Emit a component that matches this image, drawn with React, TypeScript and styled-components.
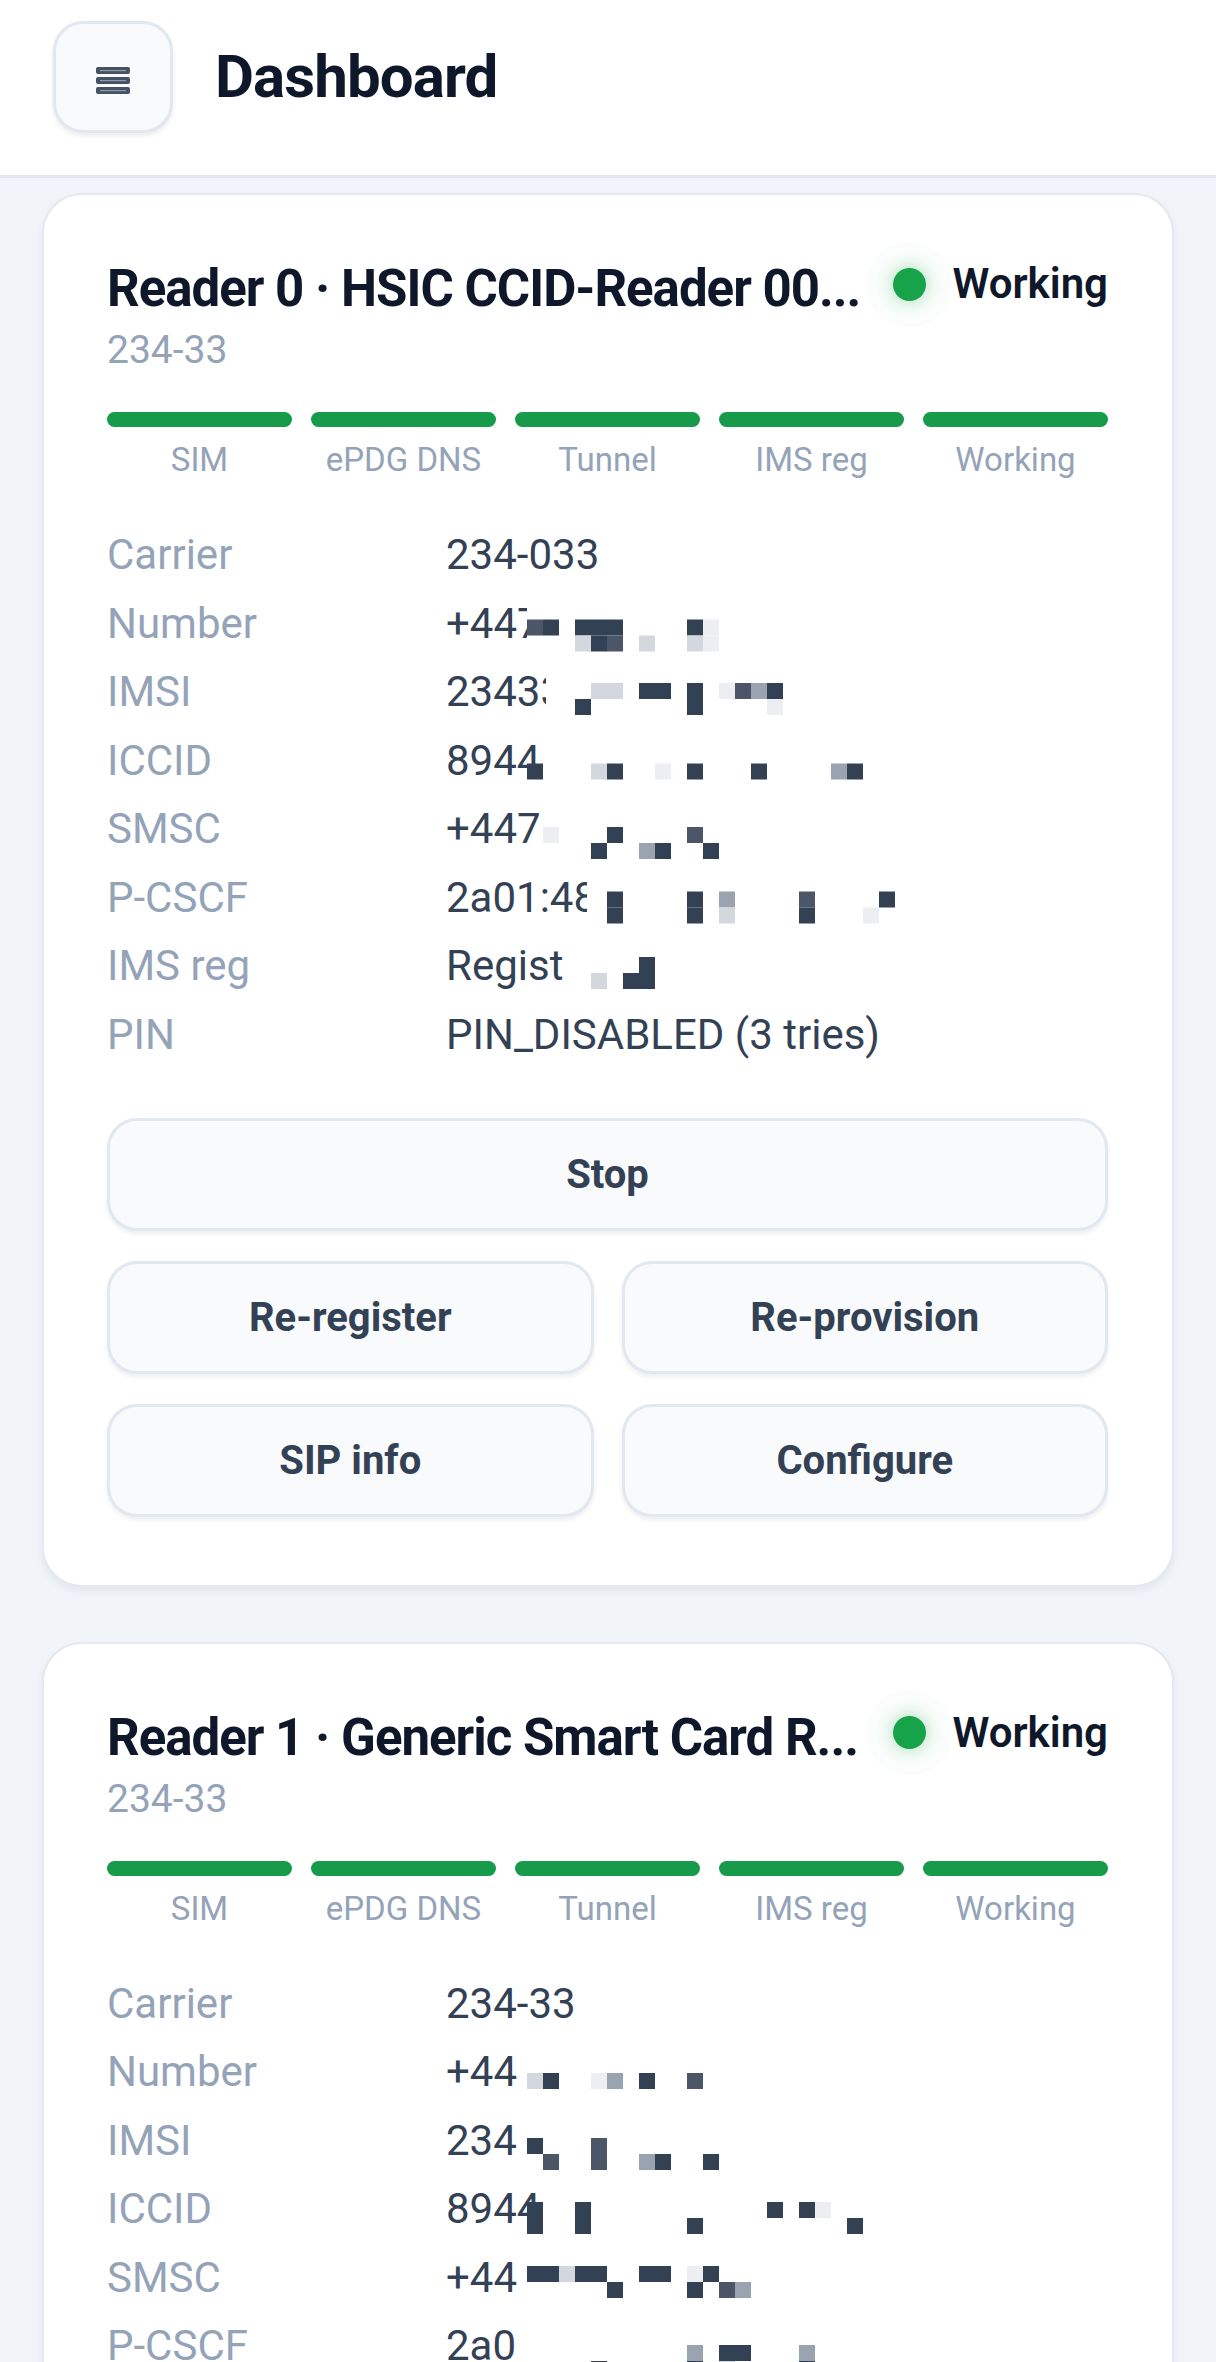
import React from "react";
import styled, { createGlobalStyle } from "styled-components";

const GlobalStyle = createGlobalStyle`
  html, body { margin: 0; padding: 0; }
  body {
    background: #f1f4f8;
    font-family: Roboto, "Liberation Sans", Arial, sans-serif;
    -webkit-font-smoothing: antialiased;
  }
  * { box-sizing: border-box; }
`;

const Page = styled.div`
  min-height: 2362px;
  background: #f1f4f8;
`;

const Header = styled.header`
  height: 178px;
  background: #ffffff;
  border-bottom: 3px solid #e3e8ef;
  display: flex;
  align-items: center;
  gap: 42px;
  padding: 0 53px 22px;
`;

const MenuButton = styled.button`
  width: 120px;
  height: 112px;
  border: 3px solid #e2e8f0;
  border-radius: 30px;
  background: #f8fafc;
  box-shadow: 0 3px 4px rgba(15, 23, 42, 0.08);
  display: flex;
  align-items: center;
  justify-content: center;
  padding: 8px 0 0;
  cursor: pointer;
`;

const PageTitle = styled.h1`
  margin: 0;
  font-size: 60px;
  font-weight: 700;
  line-height: 1;
  color: #0f172a;
  letter-spacing: -0.9px;
`;

const Main = styled.main`
  display: flex;
  flex-direction: column;
  gap: 55px;
  padding: 15px 42px 60px;
`;

const Card = styled.section`
  background: #ffffff;
  border: 2px solid #e4e9f0;
  border-radius: 40px;
  box-shadow: 0 4px 10px rgba(15, 23, 42, 0.06);
  padding: 62px 64px 68px 63px;
`;

const CardHead = styled.div`
  display: flex;
  align-items: flex-start;
  gap: 24px;
`;

const TitleBlock = styled.div`
  flex: 1;
  min-width: 0;
  display: flex;
  flex-direction: column;
  gap: 3px;
`;

const CardTitle = styled.h2`
  margin: 0;
  font-size: 51px;
  font-weight: 700;
  line-height: 64px;
  letter-spacing: -1px;
  color: #0f172a;
  white-space: nowrap;
  overflow: hidden;
  text-overflow: ellipsis;
`;

const CardSub = styled.div`
  font-size: 39px;
  line-height: 52px;
  color: #94a3b8;
`;

const Status = styled.div`
  flex-shrink: 0;
  display: flex;
  align-items: center;
  gap: 26px;
  margin-top: 2px;
`;

const Dot = styled.span<{ $color: string }>`
  width: 33px;
  height: 33px;
  border-radius: 50%;
  background: ${(p) => p.$color};
  box-shadow: 0 0 0 26px rgba(22, 163, 74, 0.025), 0 0 14px 4px rgba(22, 163, 74, 0.22);
`;

const StatusText = styled.span`
  font-size: 42px;
  font-weight: 600;
  line-height: 50px;
  color: #0f172a;
`;

const Steps = styled.div`
  margin-top: 36px;
  display: grid;
  grid-template-columns: repeat(5, 1fr);
  column-gap: 19px;
`;

const Step = styled.div`
  display: flex;
  flex-direction: column;
  align-items: center;
  gap: 13px;
`;

const StepBar = styled.div<{ $done: boolean }>`
  width: 100%;
  height: 15px;
  border-radius: 8px;
  background: ${(p) => (p.$done ? "#179a49" : "#e2e8f0")};
`;

const StepLabel = styled.div`
  font-size: 33px;
  line-height: 40px;
  color: #94a3b8;
  white-space: nowrap;
`;

const InfoGrid = styled.dl`
  margin: 43px 0 0;
  display: grid;
  grid-template-columns: 339px 1fr;
  row-gap: 5.5px;
  font-size: 42px;
  line-height: 63px;
`;

const InfoLabel = styled.dt`
  margin: 0;
  color: #94a3b8;
`;

const InfoValue = styled.dd`
  margin: 0;
  position: relative;
  color: #334155;
  white-space: nowrap;
`;

const MosaicSvg = styled.svg`
  position: absolute;
  left: 81px;
  top: 0;
  display: block;
`;

const Actions = styled.div`
  margin-top: 52px;
  display: grid;
  grid-template-columns: 1fr 1fr;
  column-gap: 28px;
  row-gap: 30px;
`;

const ActionButton = styled.button<{ $wide?: boolean }>`
  grid-column: ${(p) => (p.$wide ? "1 / -1" : "auto")};
  height: 113px;
  border: 3px solid #e2e8f0;
  border-radius: 30px;
  background: #f8fafc;
  box-shadow: 0 3px 4px rgba(15, 23, 42, 0.07);
  font-family: Roboto, "Liberation Sans", Arial, sans-serif;
  font-size: 40px;
  font-weight: 700;
  color: #334155;
  cursor: pointer;
`;

const CELL = 16;
const palette: Record<string, string> = {
  d: "#334155",
  m: "#4b5668",
  g: "#9aa3b0",
  l: "#d3d7de",
  w: "#eceef2",
};

type MosaicSpec = { top: number; cut?: number; cells: string[] };

function Mosaic({ spec }: { spec: MosaicSpec }) {
  const cols = Math.max(...spec.cells.map((r) => r.length));
  const width = cols * CELL;
  const height = 63;
  return (
    <MosaicSvg width={width} height={height} viewBox={`0 0 ${width} ${height}`} aria-hidden="true">
      {spec.cut !== undefined && (
        <rect x={spec.cut} y={0} width={width - spec.cut} height={height} fill="#ffffff" />
      )}
      {spec.cells.map((row, r) =>
        row.split("").map((ch, c) =>
          palette[ch] ? (
            <rect
              key={`${r}-${c}`}
              x={c * CELL}
              y={spec.top + r * CELL}
              width={CELL}
              height={CELL}
              fill={palette[ch]}
            />
          ) : null
        )
      )}
    </MosaicSvg>
  );
}

type Row = { label: string; value: string; mosaic?: MosaicSpec };

type Reader = {
  title: string;
  sub: string;
  rows: Row[];
};

const steps = ["SIM", "ePDG DNS", "Tunnel", "IMS reg", "Working"];

const readers: Reader[] = [
  {
    title: "Reader 0 · HSIC CCID-Reader 00...",
    sub: "234-33",
    rows: [
      { label: "Carrier", value: "234-033" },
      {
        label: "Number",
        value: "+447",
        mosaic: { top: 27.5, cut: 0, cells: ["md.ddd....dw", "...ldm.l..lw"] },
      },
      {
        label: "IMSI",
        value: "23433",
        mosaic: { top: 23, cut: 19, cells: ["....ll.dd.d.wmgd", "...d......d....w"] },
      },
      {
        label: "ICCID",
        value: "8944",
        mosaic: { top: 34.5, cells: ["d...ld..w.d...d....gd"] },
      },
      {
        label: "SMSC",
        value: "+447",
        mosaic: { top: 30, cells: [".w...d....m", "....d..gd..d"] },
      },
      {
        label: "P-CSCF",
        value: "2a01:48",
        mosaic: { top: 25.5, cut: 60, cells: [".....d....d.g....m....d", ".....d....d.l....d...w"] },
      },
      {
        label: "IMS reg",
        value: "Regist",
        mosaic: { top: 23, cells: [".......d", "....l.dd"] },
      },
      { label: "PIN", value: "PIN_DISABLED (3 tries)" },
    ],
  },
  {
    title: "Reader 1 · Generic Smart Card R...",
    sub: "234-33",
    rows: [
      { label: "Carrier", value: "234-33" },
      {
        label: "Number",
        value: "+44",
        mosaic: { top: 33, cells: ["ld..wg.d..m"] },
      },
      {
        label: "IMSI",
        value: "234",
        mosaic: { top: 29, cells: ["d...m", ".m..m..gd..d"] },
      },
      {
        label: "ICCID",
        value: "8944",
        mosaic: { top: 25, cells: ["d..d...........d.dw", "d..d......d.........d"] },
      },
      {
        label: "SMSC",
        value: "+44",
        mosaic: { top: 20, cells: ["ddldd..dd.wd", ".....d....d.mg"] },
      },
      {
        label: "P-CSCF",
        value: "2a0",
        mosaic: { top: 31, cells: ["..........g.dd...g", "....d.....d.l....d"] },
      },
      {
        label: "IMS reg",
        value: "Regist",
        mosaic: { top: 20, cells: ["......d", "....l.dd"] },
      },
      { label: "PIN", value: "PIN_DISABLED (3 tries)" },
    ],
  },
];

function MenuIcon() {
  return (
    <svg width="34" height="27" viewBox="0 0 34 27" aria-hidden="true">
      {[0, 10, 20].map((y) => (
        <g key={y}>
          <rect x="0" y={y} width="34" height="7" rx="2" fill="#465263" />
          <rect x="4" y={y + 3} width="26" height="1.2" fill="#8e9aab" />
        </g>
      ))}
    </svg>
  );
}

function ReaderCard({ reader }: { reader: Reader }) {
  return (
    <Card>
      <CardHead>
        <TitleBlock>
          <CardTitle>{reader.title}</CardTitle>
          <CardSub>{reader.sub}</CardSub>
        </TitleBlock>
        <Status>
          <Dot $color="#16a34a" />
          <StatusText>Working</StatusText>
        </Status>
      </CardHead>
      <Steps>
        {steps.map((s) => (
          <Step key={s}>
            <StepBar $done />
            <StepLabel>{s}</StepLabel>
          </Step>
        ))}
      </Steps>
      <InfoGrid>
        {reader.rows.map((row) => (
          <React.Fragment key={row.label}>
            <InfoLabel>{row.label}</InfoLabel>
            <InfoValue>
              {row.value}
              {row.mosaic && <Mosaic spec={row.mosaic} />}
            </InfoValue>
          </React.Fragment>
        ))}
      </InfoGrid>
      <Actions>
        <ActionButton $wide>Stop</ActionButton>
        <ActionButton>Re-register</ActionButton>
        <ActionButton>Re-provision</ActionButton>
        <ActionButton>SIP info</ActionButton>
        <ActionButton>Configure</ActionButton>
      </Actions>
    </Card>
  );
}

export default function App() {
  return (
    <Page>
      <GlobalStyle />
      <Header>
        <MenuButton aria-label="Menu">
          <MenuIcon />
        </MenuButton>
        <PageTitle>Dashboard</PageTitle>
      </Header>
      <Main>
        {readers.map((r) => (
          <ReaderCard key={r.title} reader={r} />
        ))}
      </Main>
    </Page>
  );
}
